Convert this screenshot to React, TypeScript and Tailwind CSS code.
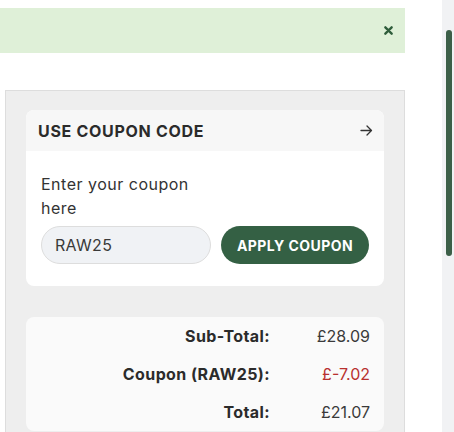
import React from "react";

const font = { fontFamily: "Inter, 'Open Sans', sans-serif" };

function CloseIcon() {
  return (
    <svg width="9" height="9" viewBox="0 0 10 10" aria-hidden>
      <path d="M1.5 1.5 L8.5 8.5 M8.5 1.5 L1.5 8.5" stroke="#2f5d3b" strokeWidth="2.6" strokeLinecap="round" />
    </svg>
  );
}

function ArrowIcon() {
  return (
    <svg width="13" height="11" viewBox="0 0 13 11" fill="none" aria-hidden>
      <path d="M1 5.5 H11.5 M7 1 L11.5 5.5 L7 10" stroke="#333" strokeWidth="1.3" strokeLinecap="round" strokeLinejoin="round" />
    </svg>
  );
}

function TotalRow({ label, value, red }: { label: string; value: string; red?: boolean }) {
  return (
    <div className="grid h-[38px] grid-cols-[1fr_100px] items-center">
      <div className="text-right text-[16px] font-bold tracking-[0.4px] text-[#2b2b2b]">{label}</div>
      <div className={`text-right text-[16px] ${red ? "text-[#b8302f]" : "text-[#3a3a3a]"}`}>{value}</div>
    </div>
  );
}

export default function App() {
  return (
    <div className="flex h-[432px] w-[454px] overflow-hidden bg-white" style={font}>
      <div className="w-[405px] shrink-0 pt-[8px]">
        <div className="flex h-[45px] items-center justify-end bg-[#dff0d8] pr-[12px]">
          <CloseIcon />
        </div>

        <div className="ml-[5px] mt-[37px] h-[360px] border border-[#dddddd] bg-[#eeeeee] px-[20px] pt-[19px]">
          <div className="overflow-hidden rounded-[8px] bg-white">
            <div className="flex h-[41px] items-center justify-between bg-[#f7f7f7] pl-[12px] pr-[11px]">
              <span className="text-[16px] font-bold tracking-[0.7px] text-[#2b2b2b]">USE COUPON CODE</span>
              <ArrowIcon />
            </div>
            <div className="flex items-end gap-[10px] px-[15px] pb-[22px] pt-[21px]">
              <div className="w-[170px]">
                <div className="mb-[6px] text-[16px] leading-[24px] tracking-[0.5px] text-[#333]">
                  Enter your coupon
                  <br />
                  here
                </div>
                <div className="flex h-[38px] items-center rounded-full border border-[#dddddd] bg-[#f0f2f5] px-[13px] text-[16px] tracking-[0.3px] text-[#3a3a3a]">
                  RAW25
                </div>
              </div>
              <button className="h-[38px] w-[148px] rounded-full bg-[#346044] text-[14px] font-bold tracking-[0.45px] text-white">
                APPLY COUPON
              </button>
            </div>
          </div>

          <div className="mt-[31px] rounded-[8px] bg-[#fafafa] pr-[14px]">
            <TotalRow label="Sub-Total:" value="£28.09" />
            <TotalRow label="Coupon (RAW25):" value="£-7.02" red />
            <TotalRow label="Total:" value="£21.07" />
          </div>
        </div>
      </div>

      <div className="flex-1" />

      <div className="w-[12px] shrink-0 bg-[#f1f2f4] pl-[4px] pt-[30px]">
        <div className="h-[226px] w-[6px] rounded-full bg-[#3c5f48]" />
      </div>
    </div>
  );
}
